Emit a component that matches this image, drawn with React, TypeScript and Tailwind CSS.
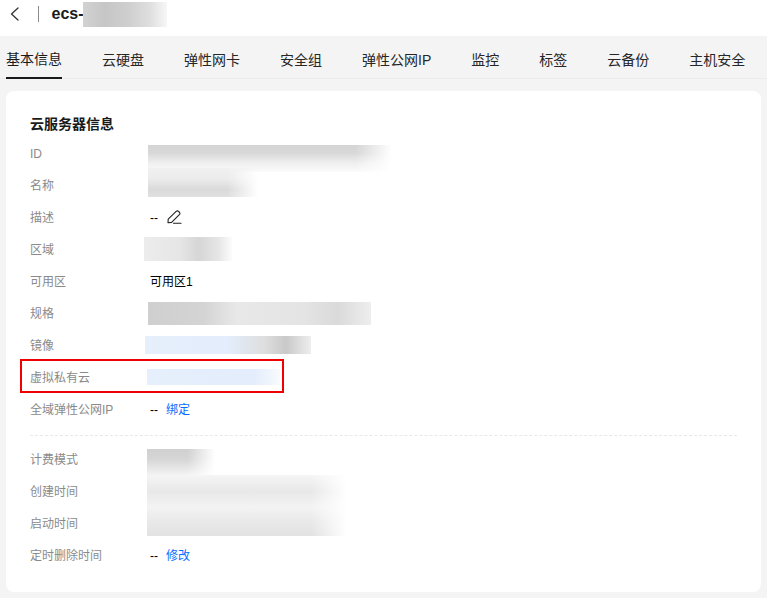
import { ReactNode } from "react";

const tabs = ["基本信息", "云硬盘", "弹性网卡", "安全组", "弹性公网IP", "监控", "标签", "云备份", "主机安全"];

// 打码区域: 模糊块, 高度可以超出所在的行
const Smudge = ({ className }: { className: string }) => (
    <div aria-hidden className={`shrink-0 ${className}`} />
);

const Row = ({ label, children }: { label: string; children?: ReactNode }) => (
    <div className="relative flex h-8 items-center">
        <span className="w-[120px] shrink-0 pt-[2px] text-[#8a8a8a]">{label}</span>
        <div className="flex h-full items-center text-black">{children}</div>
    </div>
);

const Empty = ({ link }: { link: string }) => (
    <div className="flex pt-[2px]">
        <span className="w-4">--</span>
        <a className="text-[#0a6cff]">{link}</a>
    </div>
);

export default function App() {
    return (
        <div className="h-[598px] w-[767px] overflow-hidden bg-[#f4f4f4] font-['Liberation_Sans','Noto_Sans_CJK_SC',sans-serif] text-xs">
            <header className="flex h-9 items-start bg-white">
                <div className="flex h-7 items-center">
                    <svg viewBox="0 0 9 14" className="ml-[9.5px] h-[14px] w-[9px] text-[#333]" fill="none" stroke="currentColor" strokeWidth="1.3">
                        <path d="M8 1 1.5 7 8 13" strokeLinecap="round" strokeLinejoin="round" />
                    </svg>
                    <div className="ml-[19px] h-4 w-px bg-[#8c8c8c]" />
                    <h1 className="ml-[13px] text-base leading-none font-bold text-[#1a1a1a]">ecs-</h1>
                    <Smudge className="-ml-[1px] h-[25px] w-[84px] bg-[linear-gradient(90deg,#d2d2d2_0%,#c6c6c6_25%,#cfcfcf_55%,#dfdfdf_80%,#f7f7f7_100%)]" />
                </div>
            </header>

            <nav className="flex h-[43px] gap-10 border-b border-[#ececec] pl-[6px]">
                {tabs.map((tab, i) => (
                    <div
                        key={tab}
                        className={
                            i === 0
                                ? "-mb-px flex h-[43px] items-center border-b-2 border-[#1a1a1a] pt-[5px] text-sm text-[#1a1a1a]"
                                : "flex h-[42px] items-center pt-[5px] text-sm text-[#262626]"
                        }
                    >
                        {tab}
                    </div>
                ))}
            </nav>

            <main className="mx-[6px] mt-3 h-[501px] rounded-lg bg-white px-6 pt-[22px]">
                <h2 className="mb-[2px] h-[22px] text-sm leading-[22px] font-semibold text-[#1a1a1a]">云服务器信息</h2>

                <div>
                    <Row label="ID">
                        <Smudge className="mt-[8px] -ml-[2px] h-[27px] w-[244px] self-start bg-[linear-gradient(180deg,#d4d4d4_0%,#d8d8d8_30%,#eeeeee_65%,#fbfbfb_100%)] [mask-image:linear-gradient(90deg,#000_85%,transparent_100%)]" />
                    </Row>
                    <Row label="名称">
                        <Smudge className="-mt-[1px] -ml-[2px] h-[29px] w-[110px] self-start bg-[linear-gradient(180deg,#f1f1f1_0%,#ececec_35%,#dadada_75%,#e0e0e0_100%)] [mask-image:linear-gradient(90deg,#000_72%,transparent_100%)]" />
                    </Row>
                    <Row label="描述">
                        <span className="w-[17px] pt-[2px]">--</span>
                        <svg viewBox="0 0 15 14" className="h-[14px] w-[15px] text-[#222]" fill="none" stroke="currentColor" strokeWidth="1.1">
                            <path d="M1.2 9.2 9.4 1.2Q10.3.5 11.3 1.2L12.6 2.5Q13.3 3.5 12.6 4.4L4.6 12.4 1 12.8Z" strokeLinejoin="round" />
                            <path d="M6.5 13.3H14" strokeLinecap="round" />
                        </svg>
                    </Row>
                    <Row label="区域">
                        <Smudge className="-ml-[6px] h-6 w-[88px] bg-[linear-gradient(90deg,#ececec_0%,#e6e6e6_40%,#d6d6d6_62%,#e6e6e6_85%,#fcfcfc_100%)]" />
                    </Row>
                    <Row label="可用区">
                        <span className="pt-[2px]">可用区1</span>
                    </Row>
                    <Row label="规格">
                        <Smudge className="-ml-[2px] h-[23px] w-[223px] bg-[linear-gradient(90deg,#cfcfcf_0%,#d4d4d4_25%,#e8e8e8_40%,#e4e4e4_70%,#dadada_85%,#eeeeee_100%)]" />
                    </Row>
                    <Row label="镜像">
                        <Smudge className="-ml-[5px] h-[18px] w-[166px] bg-[linear-gradient(90deg,#e6effc_0%,#e3edfb_50%,#dedede_72%,#c9c9c9_85%,#eeeeee_100%)]" />
                    </Row>
                    <Row label="虚拟私有云">
                        <Smudge className="-ml-[3px] h-4 w-[133px] bg-[linear-gradient(90deg,#e6effc_0%,#e3edfb_80%,#f8fafe_100%)]" />
                        <div className="absolute top-[-2px] left-[-10px] h-[34px] w-[264px] border-2 border-[#f00000]" />
                    </Row>
                    <Row label="全域弹性公网IP">
                        <Empty link="绑定" />
                    </Row>
                </div>

                <div className="mt-[10px] mb-[7px] border-t border-dashed border-[#e8e8e8]" />

                <div>
                    <Row label="计费模式">
                        <Smudge className="mt-[6px] -ml-[3px] h-[26px] w-[68px] self-start bg-[linear-gradient(180deg,#d0d0d0_0%,#d6d6d6_40%,#f3f3f3_100%)] [mask-image:linear-gradient(90deg,#000_60%,transparent_100%)]" />
                    </Row>
                    <Row label="创建时间">
                        <Smudge className="-ml-[3px] h-8 w-[200px] self-start bg-[linear-gradient(180deg,#f5f5f5_0%,#e8e8e8_50%,#f3f3f3_100%)] [mask-image:linear-gradient(90deg,#000_82%,transparent_100%)]" />
                    </Row>
                    <Row label="启动时间">
                        <Smudge className="-ml-[3px] h-[29px] w-[200px] self-start bg-[linear-gradient(180deg,#f3f3f3_0%,#e8e8e8_55%,#e2e2e2_100%)] [mask-image:linear-gradient(90deg,#000_82%,transparent_100%)]" />
                    </Row>
                    <Row label="定时删除时间">
                        <Empty link="修改" />
                    </Row>
                </div>
            </main>
        </div>
    );
}
